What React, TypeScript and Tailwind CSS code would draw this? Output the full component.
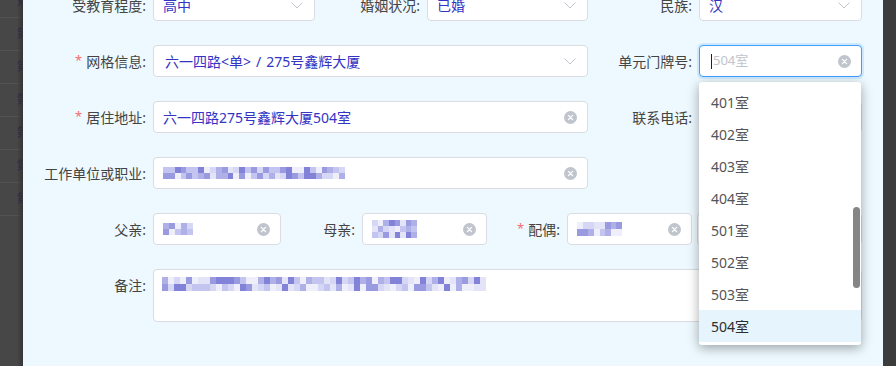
import React from 'react';
import clsx from 'clsx';

// 打码用的颜色
const palette = ['#8282d8', '#9a9ae0', '#b0b0e8', '#c4c4f0', '#d6d6f5', '#e4e4f9', '#efeffb'];

function Mosaic({ w, h, seed }: { w: number; h: number; seed: number }) {
  const cols = Math.ceil(w / 6);
  const rows = Math.max(1, Math.round(h / 6));
  let s = seed;
  const rnd = () => {
    s = (s * 9301 + 49297) % 233280;
    return s / 233280;
  };
  const cells: string[] = [];
  for (let i = 0; i < cols * rows; i++) cells.push(palette[Math.floor(rnd() * palette.length)]);
  return (
    <div
      className="grid shrink-0"
      style={{ width: w, height: h, gridTemplateColumns: `repeat(${cols}, 1fr)` }}
    >
      {cells.map((c, i) => (
        <div key={i} style={{ background: c }} />
      ))}
    </div>
  );
}

function Label({
  children,
  required,
  className,
}: {
  children: React.ReactNode;
  required?: boolean;
  className?: string;
}) {
  return (
    <div
      className={clsx(
        'flex h-8 shrink-0 items-center justify-end whitespace-nowrap pr-[7px] text-[14px] text-[#444]',
        className
      )}
    >
      {required && <span className="mr-[4px] text-[13px] text-[#f56c6c]">*</span>}
      {children}
    </div>
  );
}

function ClearIcon() {
  return (
    <svg width="13" height="13" viewBox="0 0 13 13" className="ml-auto shrink-0">
      <circle cx="6.5" cy="6.5" r="6.5" fill="#c0c4cc" />
      <path d="M4.4 4.4 L8.6 8.6 M8.6 4.4 L4.4 8.6" stroke="#fff" strokeWidth="1.3" strokeLinecap="round" />
    </svg>
  );
}

function Arrow() {
  return (
    <svg width="12" height="7" viewBox="0 0 12 7" className="ml-auto mr-[1px] shrink-0">
      <polyline points="0.5,0.5 6,6 11.5,0.5" fill="none" stroke="#c0c4cc" strokeWidth="1" />
    </svg>
  );
}

function Field({
  className,
  children,
  focused,
}: {
  className?: string;
  children?: React.ReactNode;
  focused?: boolean;
}) {
  return (
    <div
      className={clsx(
        'flex h-8 shrink-0 items-center whitespace-nowrap rounded-[4px] border bg-white pl-[9px] pr-[10px] text-[14px] text-[#3333c4]',
        focused
          ? 'border-[#409eff] shadow-[0_0_0_2px_rgba(64,158,255,0.18)]'
          : 'border-[#d9dde3]',
        className
      )}
    >
      {children}
    </div>
  );
}

const bgRows = [0, 1, 2, 3, 4, 5, 6];
const rooms = ['401室', '402室', '403室', '404室', '501室', '502室', '503室', '504室'];

export default function App() {
  return (
    <div className="flex h-[366px] w-[896px] overflow-hidden bg-[#474747] font-['Noto_Sans','Noto_Sans_CJK_SC',sans-serif]">
      {/* 遮罩后面的表格 */}
      <div className="relative w-[23px] shrink-0 overflow-hidden bg-[#474747]">
        <div className="-mt-[15px] flex flex-col">
          {bgRows.map((r) => (
            <div
              key={r}
              className="flex h-[33px] items-center border-b border-[#525252] pl-[17px] text-[12px] text-[#1b1b52]"
            >
              第
            </div>
          ))}
        </div>
        <div className="absolute inset-y-0 right-0 w-[6px] bg-gradient-to-r from-transparent to-[#353535]" />
      </div>

      {/* 弹窗主体 */}
      <div className="relative w-[860px] shrink-0 bg-[#edf9fe]">
        <div className="-mt-[11px] flex flex-col gap-6">
          <div className="flex">
            <Label className="w-[130px]">受教育程度:</Label>
            <Field className="w-[162px]">
              高中
              <Arrow />
            </Field>
            <Label className="w-[112px]">婚姻状况:</Label>
            <Field className="w-[161px]">
              已婚
              <Arrow />
            </Field>
            <Label className="w-[111px]">民族:</Label>
            <Field className="w-[163px]">
              汉
              <Arrow />
            </Field>
          </div>

          <div className="flex">
            <Label required className="w-[130px]">网格信息:</Label>
            <Field className="w-[435px] pl-[11px]">
              六一四路&lt;单&gt;<span className="mx-[5px]">/</span>275号鑫辉大厦
              <Arrow />
            </Field>
            <Label className="w-[111px]">单元门牌号:</Label>
            <Field focused className="w-[163px] pl-[11px]">
              <span className="mr-[1px] h-[15px] w-px bg-[#222]" />
              <span className="text-[13px] text-[#c0c4cc]">504室</span>
              <ClearIcon />
            </Field>
          </div>

          <div className="flex">
            <Label required className="w-[130px]">居住地址:</Label>
            <Field className="w-[435px]">
              六一四路275号鑫辉大厦504室
              <ClearIcon />
            </Field>
            <Label className="w-[111px]">联系电话:</Label>
            <Field className="w-[163px]" />
          </div>

          <div className="flex">
            <Label className="w-[130px]">工作单位或职业:</Label>
            <Field className="w-[435px]">
              <Mosaic w={182} h={12} seed={7} />
              <ClearIcon />
            </Field>
          </div>

          <div className="flex">
            <Label className="w-[130px]">父亲:</Label>
            <Field className="w-[128px] pl-[6px]">
              <Mosaic w={30} h={12} seed={3} />
              <ClearIcon />
            </Field>
            <Label className="w-[81px]">母亲:</Label>
            <Field className="w-[125px] pl-[7px]">
              <Mosaic w={45} h={18} seed={11} />
              <ClearIcon />
            </Field>
            <Label required className="w-[80px]">配偶:</Label>
            <Field className="w-[125px] pl-[7px]">
              <Mosaic w={45} h={14} seed={19} />
              <ClearIcon />
            </Field>
            <div className="w-[5px] shrink-0" />
            <Field className="w-[165px]" />
          </div>

          <div className="flex items-start">
            <Label className="w-[130px]">备注:</Label>
            <div className="h-[53px] w-[709px] shrink-0 rounded-[4px] border border-[#d9dde3] bg-white pl-[8px] pt-[7px]">
              <Mosaic w={324} h={14} seed={29} />
            </div>
          </div>
        </div>

        {/* 下拉选项 */}
        <div className="absolute left-[676px] top-[82px] h-[263px] w-[162px] overflow-hidden rounded-[3px] bg-white py-[4px] shadow-[0_3px_12px_rgba(0,0,0,0.35)]">
          {rooms.map((room) => (
            <div
              key={room}
              className={clsx(
                'flex h-8 items-center pl-[12px] text-[14px]',
                room === '504室' ? 'bg-[#e6f5fd] text-[#2e2e2e]' : 'text-[#555]'
              )}
            >
              {room}
            </div>
          ))}
          <div className="absolute right-[1px] top-[125px] h-[81px] w-[7px] rounded-full bg-[#858585]" />
        </div>
      </div>

      <div className="w-[13px] shrink-0 bg-[#3c3c3c]" />
    </div>
  );
}
